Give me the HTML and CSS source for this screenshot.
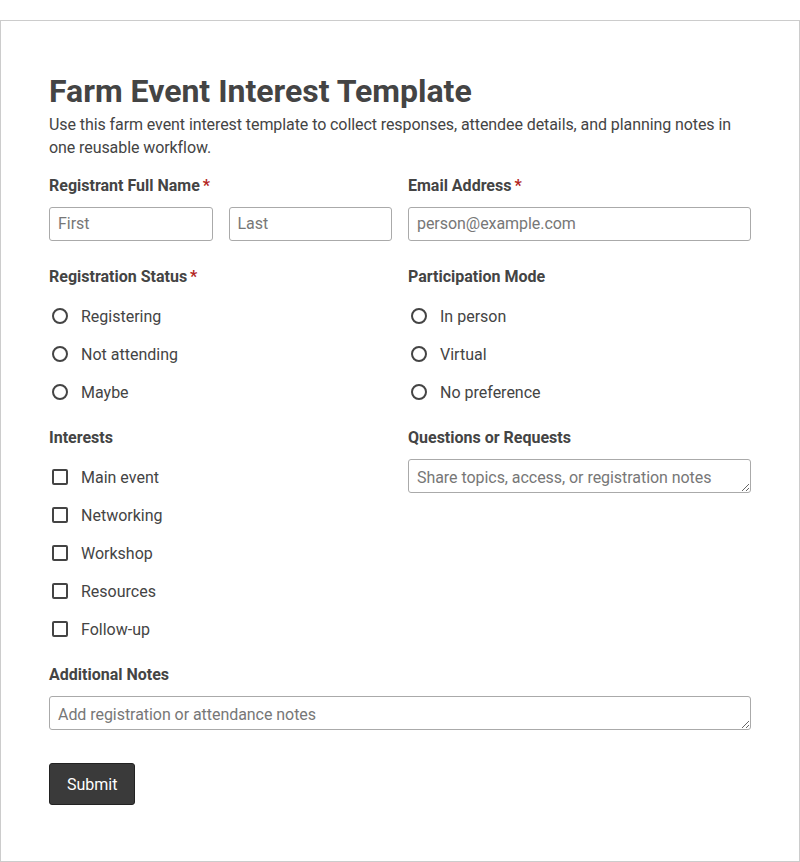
FILE: index.html
```html
<!DOCTYPE html>
<html>
<head>
  <meta charset="utf-8">
  <title>Farm Event Interest Template</title>
  <link rel="stylesheet" href="styles.css">
</head>
<body>
    <form class="card">
        <h1>Farm Event Interest Template</h1>
        <p class="intro">Use this farm event interest template to collect responses, attendee details, and planning notes in one reusable workflow.</p>
        <div class="grid">
            <div class="field first-row">
                <label class="label">Registrant Full Name<span class="req">*</span></label>
                <div class="pair">
                    <input type="text" placeholder="First">
                    <input type="text" placeholder="Last">
                </div>
            </div>
            <div class="field first-row">
                <label class="label" for="email">Email Address<span class="req">*</span></label>
                <input type="text" id="email" placeholder="person@example.com">
            </div>
            <div class="field">
                <div class="label">Registration Status<span class="req">*</span></div>
                <div class="options">
                    <label class="option"><input type="radio" name="status"> Registering</label>
                    <label class="option"><input type="radio" name="status"> Not attending</label>
                    <label class="option"><input type="radio" name="status"> Maybe</label>
                </div>
            </div>
            <div class="field">
                <div class="label">Participation Mode</div>
                <div class="options">
                    <label class="option"><input type="radio" name="mode"> In person</label>
                    <label class="option"><input type="radio" name="mode"> Virtual</label>
                    <label class="option"><input type="radio" name="mode"> No preference</label>
                </div>
            </div>
            <div class="field">
                <div class="label">Interests</div>
                <div class="options">
                    <label class="option"><input type="checkbox"> Main event</label>
                    <label class="option"><input type="checkbox"> Networking</label>
                    <label class="option"><input type="checkbox"> Workshop</label>
                    <label class="option"><input type="checkbox"> Resources</label>
                    <label class="option"><input type="checkbox"> Follow-up</label>
                </div>
            </div>
            <div class="field">
                <label class="label" for="questions">Questions or Requests</label>
                <textarea id="questions" rows="1" placeholder="Share topics, access, or registration notes"></textarea>
            </div>
            <div class="field wide">
                <label class="label" for="notes">Additional Notes</label>
                <textarea id="notes" rows="1" placeholder="Add registration or attendance notes"></textarea>
            </div>
        </div>
        <button type="button" class="submit">Submit</button>
    </form>
</body>
</html>
```

FILE: styles.css
```css
body {
    margin: 0;
    padding-top: 20px;
    font-family: Roboto, "Liberation Sans", Arial, sans-serif;
    color: #444;
    background: #fff;
}
.card {
    border: 1px solid #ccc;
    padding: 48px 48px 56px;
}
h1 {
    margin: 3px 0 0;
    font-size: 32px;
    line-height: 38px;
    font-weight: 700;
    color: #444;
}
.intro {
    margin: 3px 0 16px;
    font-size: 16px;
    line-height: 23px;
    letter-spacing: -0.08px;
}
.grid {
    display: grid;
    grid-template-columns: 1fr 1fr;
    column-gap: 16px;
    row-gap: 22px;
}
.first-row {
    margin-bottom: 3px;
}
.wide {
    grid-column: 1 / 3;
}
.label {
    display: block;
    font-size: 16px;
    line-height: 20px;
    font-weight: 700;
    padding-top: 1px;
    margin-bottom: 11px;
}
.req {
    color: #b3261e;
    margin-left: 3px;
}
.pair {
    display: flex;
    gap: 16px;
}
input[type=text], textarea {
    display: block;
    box-sizing: border-box;
    width: 100%;
    min-width: 0;
    height: 34px;
    margin: 0;
    padding: 6px 8px 8px;
    font-family: inherit;
    font-size: 16px;
    line-height: 18px;
    letter-spacing: -0.05px;
    color: #444;
    border: 1px solid #aaa;
    border-radius: 3px;
    background: #fff;
}
textarea {
    padding: 9px 8px 5px;
    resize: vertical;
}
::placeholder {
    color: #777;
}
.options {
    display: flex;
    flex-direction: column;
    gap: 12px;
    padding-top: 5px;
}
.option {
    display: flex;
    align-items: center;
    gap: 13px;
    height: 26px;
    font-size: 16px;
    padding-left: 3px;
}
.option input {
    appearance: none;
    -webkit-appearance: none;
    box-sizing: border-box;
    width: 16px;
    height: 16px;
    margin: 0;
    border: 2px solid #444;
    background: #fff;
}
.option input[type=radio] {
    border-radius: 50%;
}
.option input[type=checkbox] {
    border-radius: 2px;
}
.submit {
    margin-top: 33px;
    padding: 11px 17px 9px;
    font-family: inherit;
    font-size: 16px;
    line-height: 20px;
    color: #fff;
    background: #3a3a3a;
    border: 1px solid #222;
    border-radius: 3px;
}
```
